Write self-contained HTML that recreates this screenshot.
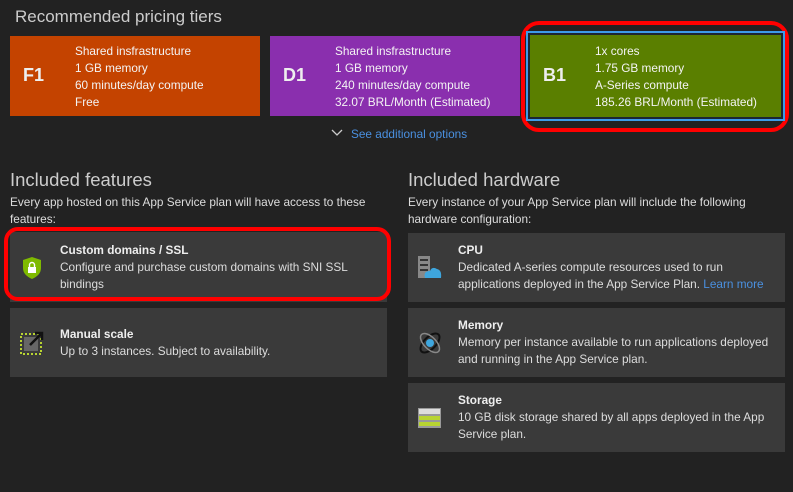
<!DOCTYPE html>
<html><head><style>
*{margin:0;padding:0;box-sizing:border-box}
body{width:793px;height:492px;background:#222;font-family:"Liberation Sans",Arial,sans-serif;color:#ddd;position:relative;overflow:hidden;font-size:11.8px}
.a{position:absolute}
.h1{font-size:17px;color:#ccc}
.h2{font-size:18.5px;color:#ccc}
.tier{position:absolute;top:36px;height:80px}
.tier .lbl{position:absolute;left:13px;top:29px;font-size:18px;font-weight:bold;color:#eee}
.tier .txt{position:absolute;left:65px;top:7px;line-height:17px;color:#f4f4f4;font-size:11.8px}
.card{position:absolute;background:#3a3a3a}
.card .t{position:absolute;left:50px;line-height:17px;color:#ddd}
.card b{color:#eee}
.desc{position:absolute;line-height:17px;color:#ddd;font-size:11.8px}
</style></head><body>
<div class="a h1" style="left:15px;top:7px">Recommended pricing tiers</div>
<div class="tier" style="left:10px;width:250px;background:#c44300"><div class="lbl">F1</div><div class="txt">Shared insfrastructure<br>1 GB memory<br>60 minutes/day compute<br>Free</div></div>
<div class="tier" style="left:270px;width:250px;background:#8a2fae"><div class="lbl">D1</div><div class="txt">Shared insfrastructure<br>1 GB memory<br>240 minutes/day compute<br>32.07 BRL/Month (Estimated)</div></div>
<div class="a" style="left:521px;top:21px;width:268px;height:111px;border:4px solid #f00;border-radius:18px"></div>
<div class="a" style="left:526px;top:31px;width:259px;height:90px;border:2px solid #3d9be8;background:#1c2633"></div>
<div class="tier" style="left:530px;top:35px;width:251px;height:82px;background:#5a7f00"><div class="lbl" style="top:30px">B1</div><div class="txt" style="top:8px">1x cores<br>1.75 GB memory<br>A-Series compute<br>185.26 BRL/Month (Estimated)</div></div>
<svg class="a" style="left:331px;top:129px" width="12" height="8"><path d="M1 1 L6 6 L11 1" stroke="#ccc" stroke-width="1.3" fill="none"/></svg>
<div class="a" style="left:351px;top:127px;color:#4a90e0;font-size:11.8px">See additional options</div>

<div class="a h2" style="left:10px;top:169px">Included features</div>
<div class="desc" style="left:10px;top:194px;width:380px">Every app hosted on this App Service plan will have access to these features:</div>
<div class="card" style="left:10px;top:232px;width:377px;height:70px">
<svg class="a" style="left:12px;top:24px" width="20" height="24"><path d="M10 1 L19 4 L19 12 Q19 19 10 23 Q1 19 1 12 L1 4Z" fill="#7fba00"/><rect x="6" y="11" width="8" height="6" fill="#fff"/><path d="M7.5 11 V9 a2.5 2.5 0 0 1 5 0 V11" stroke="#fff" stroke-width="1.4" fill="none"/></svg>
<div class="t" style="top:10px"><b>Custom domains / SSL</b><br>Configure and purchase custom domains with SNI SSL<br>bindings</div></div>
<div class="a" style="left:4px;top:227px;width:387px;height:74px;border:4px solid #f00;border-radius:14px"></div>
<div class="card" style="left:10px;top:308px;width:377px;height:69px">
<svg class="a" style="left:9px;top:22px" width="26" height="26"><rect x="2" y="4" width="20" height="20" fill="none" stroke="#b8d432" stroke-width="2" stroke-dasharray="2 2"/><rect x="5" y="7" width="14" height="14" fill="#666"/><path d="M11 15 L22 4 M16 3 H23 V10" stroke="#111" stroke-width="2.5" fill="none"/></svg>
<div class="t" style="top:18px"><b>Manual scale</b><br>Up to 3 instances. Subject to availability.</div></div>

<div class="a h2" style="left:408px;top:169px">Included hardware</div>
<div class="desc" style="left:408px;top:194px;width:380px">Every instance of your App Service plan will include the following hardware configuration:</div>
<div class="card" style="left:408px;top:233px;width:377px;height:69px">
<svg class="a" style="left:9px;top:22px" width="26" height="26"><rect x="1" y="1" width="12" height="22" fill="#888"/><rect x="3" y="4" width="8" height="2" fill="#333"/><rect x="3" y="9" width="8" height="2" fill="#333"/><rect x="3" y="14" width="8" height="2" fill="#333"/><path d="M8 23 Q6 16 13 16 Q15 11 20 14 Q25 15 24 23Z" fill="#3ea6de"/></svg>
<div class="t" style="top:9px"><b>CPU</b><br>Dedicated A-series compute resources used to run<br>applications deployed in the App Service Plan. <span style="color:#4a90e0">Learn more</span></div></div>
<div class="card" style="left:408px;top:308px;width:377px;height:69px">
<svg class="a" style="left:9px;top:22px" width="26" height="26"><ellipse cx="13" cy="13" rx="12" ry="6" transform="rotate(-45 13 13)" fill="none" stroke="#111" stroke-width="2"/><ellipse cx="13" cy="13" rx="12" ry="6" transform="rotate(45 13 13)" fill="none" stroke="#888" stroke-width="1.5"/><circle cx="13" cy="13" r="4" fill="#3ea6de"/></svg>
<div class="t" style="top:9px"><b>Memory</b><br>Memory per instance available to run applications deployed<br>and running in the App Service plan.</div></div>
<div class="card" style="left:408px;top:383px;width:377px;height:69px">
<svg class="a" style="left:9px;top:24px" width="26" height="22"><rect x="1" y="1" width="23" height="20" fill="#999"/><rect x="2" y="2" width="21" height="5" fill="#ddd"/><rect x="2" y="9" width="21" height="4" fill="#b8d432"/><rect x="2" y="15" width="21" height="4" fill="#b8d432"/></svg>
<div class="t" style="top:9px"><b>Storage</b><br>10 GB disk storage shared by all apps deployed in the App<br>Service plan.</div></div>
</body></html>
